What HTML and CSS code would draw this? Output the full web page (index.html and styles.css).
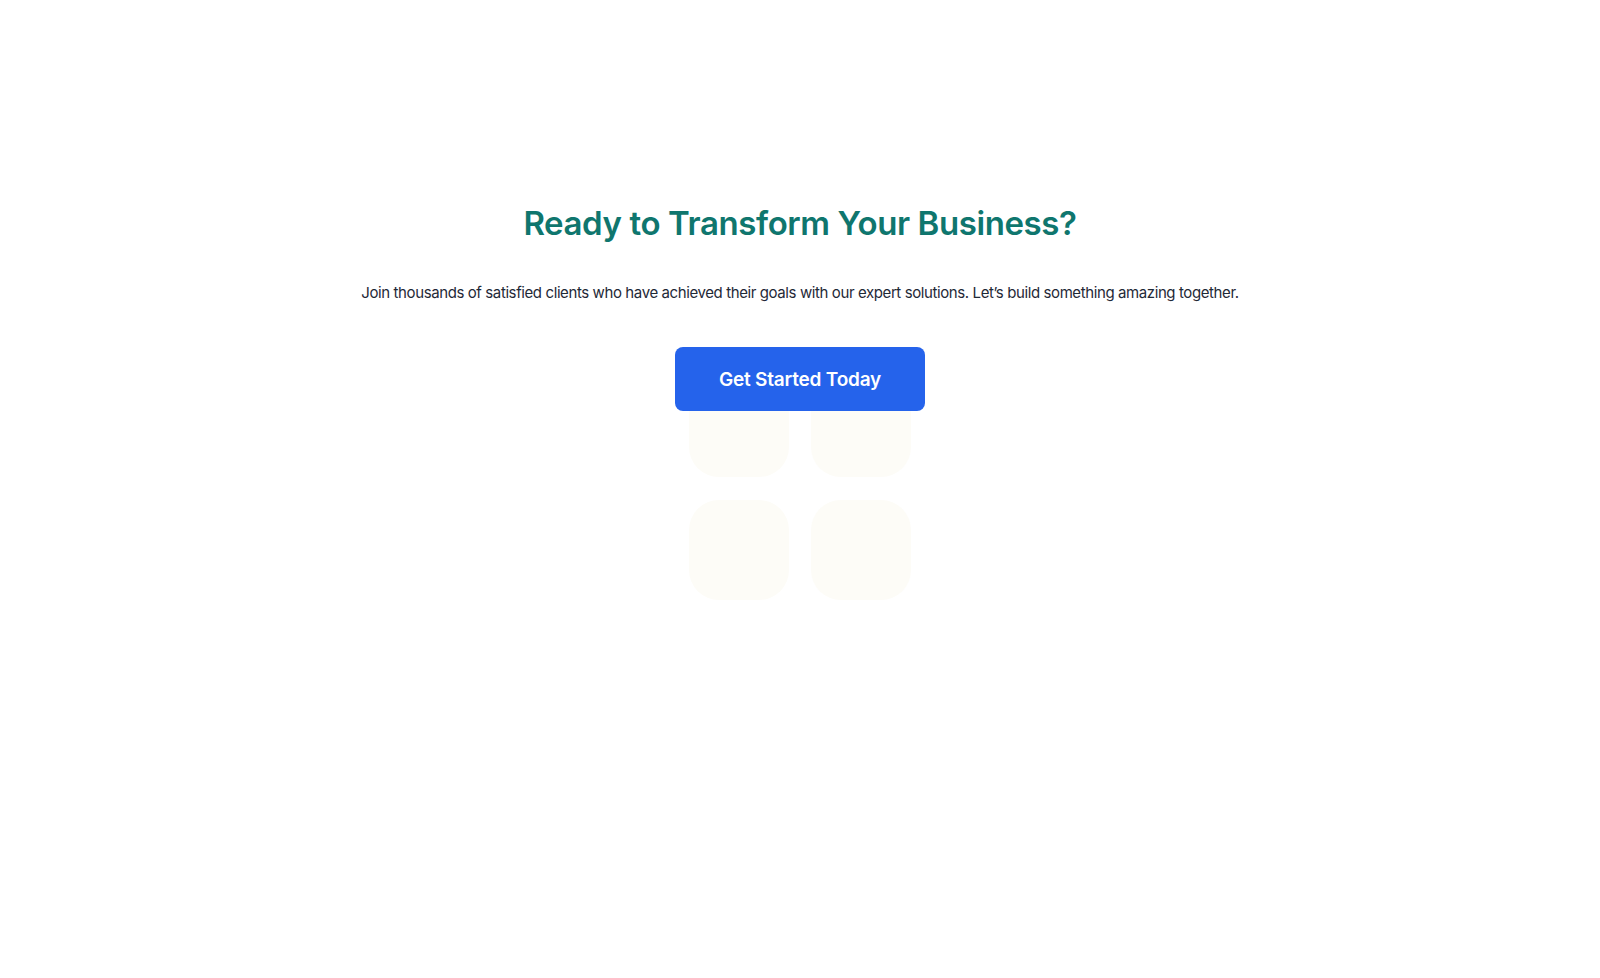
FILE: index.html
```html
<!DOCTYPE html>
<html lang="en">
<head>
<meta charset="utf-8">
<title>Ready to Transform Your Business?</title>
<link rel="stylesheet" href="styles.css">
</head>
<body>
<section class="cta">
  <div class="deco" aria-hidden="true">
    <div class="tile"></div>
    <div class="tile"></div>
    <div class="tile"></div>
    <div class="tile"></div>
  </div>
  <div class="content">
    <h2 class="title">Ready to Transform Your Business?</h2>
    <p class="lead">Join thousands of satisfied clients who have achieved their goals with our expert solutions. Let’s build something amazing together.</p>
    <a class="btn" href="#">Get Started Today</a>
  </div>
</section>
</body>
</html>
```
FILE: styles.css
```css
html, body {
  margin: 0;
  padding: 0;
  background: #ffffff;
}
body {
  font-family: Inter, "Noto Sans", sans-serif;
}
.cta {
  position: relative;
  height: 978px;
  display: flex;
  flex-direction: column;
  align-items: center;
}
.deco {
  position: absolute;
  left: 689px;
  top: 377px;
  display: grid;
  grid-template-columns: 100px 100px;
  grid-auto-rows: 100px;
  gap: 23px 22px;
}
.tile {
  background: #fdfcf7;
  border-radius: 30px;
}
.content {
  position: relative;
  display: flex;
  flex-direction: column;
  align-items: center;
  padding-top: 203px;
}
.title {
  margin: 0;
  color: #0f766e;
  font-size: 33px;
  font-weight: 600;
  line-height: 40px;
  letter-spacing: -0.4px;
}
.lead {
  margin: 38px 0 0;
  color: #1f2937;
  font-size: 15px;
  line-height: 24px;
  letter-spacing: -0.4px;
}
.btn {
  margin-top: 42px;
  display: flex;
  align-items: center;
  justify-content: center;
  width: 250px;
  height: 64px;
  box-sizing: border-box;
  background: #2563eb;
  color: #ffffff;
  border-radius: 8px;
  font-size: 19px;
  font-weight: 600;
  text-decoration: none;
  letter-spacing: -0.2px;
}
```
